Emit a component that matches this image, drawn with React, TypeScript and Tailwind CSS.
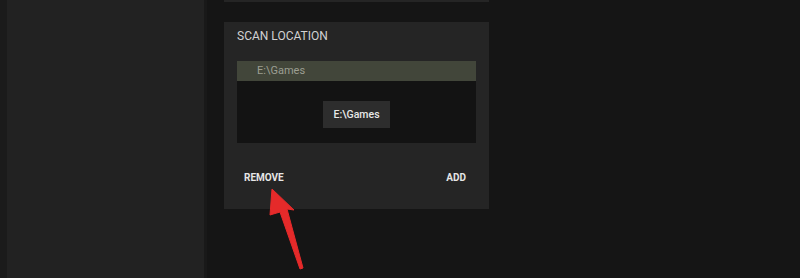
export default function App() {
  return (
    <div className="relative w-[800px] h-[278px] flex bg-[#151515] overflow-hidden" style={{ fontFamily: 'Roboto, "Liberation Sans", sans-serif' }}>
      <div className="w-[7px] h-full bg-[#1b1b1b]" />
      <div className="w-[197px] h-full bg-[#222222]" />
      <div className="w-[3px] h-full bg-[#191919]" />
      <div className="flex-1 h-full pl-[17px] flex flex-col">
        <div className="w-[265px] h-[2px] bg-[#252525]" />
        <div className="mt-[20px] w-[265px] h-[187px] bg-[#252525] pl-[13px] pr-[13px] flex flex-col">
          <div className="pt-[6px] text-[12px] leading-[16px] text-[#d2d2d2]">SCAN LOCATION</div>
          <div className="mt-[17px] h-[20px] bg-[#42463a] pl-[20px] flex items-center text-[11px] text-[#9c9e92]">E:\Games</div>
          <div className="h-[62px] bg-[#131313] flex justify-center pt-[20px]">
            <div className="w-[67px] h-[27px] bg-[#2d2d2d] flex items-center justify-center text-[10.5px] text-[#e8e8e8] font-medium">E:\Games</div>
          </div>
          <div className="mt-[28px] flex justify-between pl-[7px] pr-[10px] text-[10px] leading-[14px] font-bold text-[#e6e6e6]">
            <span>REMOVE</span>
            <span>ADD</span>
          </div>
        </div>
      </div>
      <svg className="absolute left-0 top-0" width="800" height="278" viewBox="0 0 800 278">
        <path d="M272 189 L294 210 L287 209 L303 268 L300 269 L280 212 L270 215 Z" fill="#e52a2a" stroke="#e52a2a" strokeWidth="1" strokeLinejoin="round" />
      </svg>
    </div>
  );
}
